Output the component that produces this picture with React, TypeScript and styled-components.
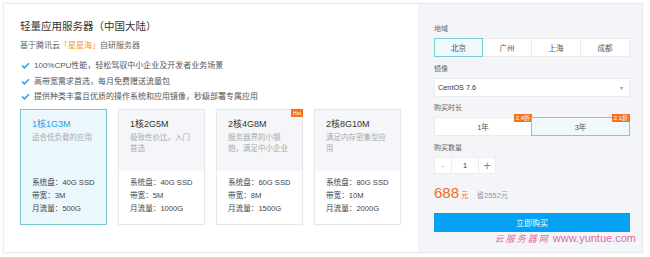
import styled, { createGlobalStyle } from "styled-components";

const GlobalStyle = createGlobalStyle`
  body {
    margin: 0;
    background: #fff;
    font-family: "Liberation Sans", "Noto Sans CJK SC", sans-serif;
    color: #333;
  }
`;

const plans = [
  { name: "1核1G3M", desc: "适合低负载的应用", disk: "40G SSD", bw: "3M", flow: "500G" },
  { name: "1核2G5M", desc: "极致性价比，入门首选", disk: "40G SSD", bw: "5M", flow: "1000G" },
  { name: "2核4G8M", desc: "服务器界的小钢炮，满足中小企业", disk: "60G SSD", bw: "8M", flow: "1500G", hot: true },
  { name: "2核8G10M", desc: "满足内存密集型应用", disk: "80G SSD", bw: "10M", flow: "2000G" },
];

const features = [
  "100%CPU性能，轻松驾驭中小企业及开发者业务场景",
  "高带宽需求首选，每月免费赠送流量包",
  "提供种类丰富且优质的操作系统和应用镜像，秒级部署专属应用",
];

const regions = ["北京", "广州", "上海", "成都"];

export default function App() {
  return (
    <>
      <GlobalStyle />
      <Page>
        <Panel>
          <Left>
            <Title>轻量应用服务器（中国大陆）</Title>
            <Subtitle>
              基于腾讯云<Highlight>「星星海」</Highlight>自研服务器
            </Subtitle>
            <FeatureList>
              {features.map((f) => (
                <Feature key={f}>
                  <svg width="9" height="7" viewBox="0 0 9 7">
                    <polyline points="1,3.5 3.4,5.8 8,1.2" fill="none" stroke="#3a9fdc" strokeWidth="1.6" />
                  </svg>
                  {f}
                </Feature>
              ))}
            </FeatureList>
            <Cards>
              {plans.map((p, i) => (
                <Card key={p.name} $active={i === 0}>
                  {p.hot && <HotBadge>Hot</HotBadge>}
                  <CardTop $active={i === 0}>
                    <CardName $active={i === 0}>{p.name}</CardName>
                    <CardDesc>{p.desc}</CardDesc>
                  </CardTop>
                  <CardSpecs>
                    <div>系统盘：{p.disk}</div>
                    <div>带宽：{p.bw}</div>
                    <div>月流量：{p.flow}</div>
                  </CardSpecs>
                </Card>
              ))}
            </Cards>
          </Left>
          <Right>
            <Label>地域</Label>
            <Segmented $cols={4}>
              {regions.map((r, i) => (
                <Option key={r} $active={i === 0}>{r}</Option>
              ))}
            </Segmented>
            <Label $gap={7}>镜像</Label>
            <Select>
              CentOS 7.6
              <Caret>▾</Caret>
            </Select>
            <Label $gap={6}>购买时长</Label>
            <Segmented $cols={2}>
              <Option>
                1年
                <Discount>2.4折</Discount>
              </Option>
              <Option $active>
                3年
                <Discount>2.1折</Discount>
              </Option>
            </Segmented>
            <Label $gap={7}>购买数量</Label>
            <Stepper>
              <StepBtn>-</StepBtn>
              <StepValue>1</StepValue>
              <StepBtn $plus>+</StepBtn>
            </Stepper>
            <PriceRow>
              <Price>688</Price>
              <Unit>元</Unit>
              <Save>省2552元</Save>
            </PriceRow>
            <BuyButton>立即购买</BuyButton>
            <Watermark>
              <span className="cn">云服务器网</span> www.yuntue.com
            </Watermark>
          </Right>
        </Panel>
      </Page>
    </>
  );
}

const Page = styled.div`
  padding: 3px;
`;

const Panel = styled.div`
  width: 640px;
  height: 250px;
  box-sizing: border-box;
  border: 1px solid #ebebeb;
  box-shadow: 0 0 3px rgba(0, 0, 0, 0.05);
  display: flex;
`;

const Left = styled.div`
  width: 414px;
  box-sizing: border-box;
  padding: 15px 0 0 16px;
  background: #fff;
`;

const Title = styled.div`
  font-size: 10.5px;
  line-height: 14px;
  color: #333;
`;

const Subtitle = styled.div`
  margin-top: 6px;
  font-size: 8px;
  line-height: 14px;
  color: #666;
`;

const Highlight = styled.span`
  color: #f29b2f;
`;

const FeatureList = styled.div`
  margin-top: 5px;
`;

const Feature = styled.div`
  display: flex;
  align-items: center;
  gap: 4px;
  font-size: 8px;
  line-height: 15.5px;
  color: #555;
  white-space: nowrap;
  svg {
    margin-left: 1px;
  }
`;

const Cards = styled.div`
  margin-top: 4px;
  display: flex;
  gap: 11px;
`;

const Card = styled.div<{ $active?: boolean }>`
  position: relative;
  width: 87px;
  height: 116px;
  box-sizing: border-box;
  border: 1px solid ${(p) => (p.$active ? "#7cc5d2" : "#e8e8e8")};
  background: ${(p) => (p.$active ? "#ecf7fd" : "#fff")};
  box-shadow: 0 0 2px rgba(0, 0, 0, 0.04);
`;

const CardTop = styled.div<{ $active?: boolean }>`
  height: 61px;
  box-sizing: border-box;
  padding: 8px 8px 0 11px;
  background: ${(p) => (p.$active ? "transparent" : "#f5f6f9")};
`;

const CardName = styled.div<{ $active?: boolean }>`
  font-size: 9px;
  line-height: 12px;
  color: ${(p) => (p.$active ? "#2ba0dc" : "#333")};
`;

const CardDesc = styled.div`
  margin-top: 2px;
  font-size: 7.5px;
  line-height: 11px;
  color: #aaa;
`;

const CardSpecs = styled.div`
  padding: 5px 0 0 11px;
  font-size: 7.6px;
  line-height: 13px;
  color: #444;
`;

const HotBadge = styled.div`
  position: absolute;
  top: -1px;
  right: -1px;
  width: 12px;
  height: 8px;
  background: #f5731c;
  color: #fff;
  font-size: 5px;
  line-height: 8px;
  text-align: center;
`;

const Right = styled.div`
  flex: 1;
  box-sizing: border-box;
  padding: 20px 12px 0 16px;
  background: #f4f5f8;
  display: flex;
  flex-direction: column;
`;

const Label = styled.div<{ $gap?: number }>`
  margin-top: ${(p) => p.$gap ?? 0}px;
  margin-bottom: 4px;
  font-size: 7px;
  line-height: 10px;
  color: #666;
`;

const Segmented = styled.div<{ $cols: number }>`
  display: grid;
  grid-template-columns: repeat(${(p) => p.$cols}, 1fr);
  height: 19px;
`;

const Option = styled.div<{ $active?: boolean }>`
  position: relative;
  display: flex;
  align-items: center;
  justify-content: center;
  box-sizing: border-box;
  margin-left: -1px;
  border: 1px solid ${(p) => (p.$active ? "#7cc9d8" : "#ebebeb")};
  background: ${(p) => (p.$active ? "#eef8fd" : "#fff")};
  z-index: ${(p) => (p.$active ? 1 : 0)};
  font-size: 7.5px;
  color: #555;
  &:first-child {
    margin-left: 0;
  }
`;

const Discount = styled.span`
  position: absolute;
  top: -4px;
  right: -1px;
  padding: 0 2px;
  height: 8px;
  background: #f5731c;
  color: #fff;
  font-size: 6px;
  line-height: 8px;
`;

const Select = styled.div`
  height: 19px;
  box-sizing: border-box;
  border: 1px solid #ebebeb;
  background: #fff;
  display: flex;
  align-items: center;
  justify-content: space-between;
  padding: 0 6px 0 3px;
  font-size: 7.3px;
  color: #333;
`;

const Caret = styled.span`
  font-size: 6px;
  color: #999;
`;

const Stepper = styled.div`
  display: flex;
  height: 17px;
`;

const StepBtn = styled.div<{ $plus?: boolean }>`
  width: 18px;
  box-sizing: border-box;
  border: 1px solid #ececec;
  background: #fff;
  display: flex;
  align-items: center;
  justify-content: center;
  font-size: ${(p) => (p.$plus ? "12px" : "9px")};
  color: ${(p) => (p.$plus ? "#1a9be2" : "#aaa")};
`;

const StepValue = styled.div`
  width: 26px;
  box-sizing: border-box;
  border-top: 1px solid #ececec;
  border-bottom: 1px solid #ececec;
  background: #fff;
  display: flex;
  align-items: center;
  justify-content: center;
  font-size: 7.5px;
  color: #333;
`;

const PriceRow = styled.div`
  margin-top: 9px;
  height: 20px;
  display: flex;
  align-items: baseline;
`;

const Price = styled.span`
  font-size: 15px;
  line-height: 20px;
  color: #f26d21;
`;

const Unit = styled.span`
  margin-left: 2px;
  font-size: 7.5px;
  color: #f26d21;
`;

const Save = styled.span`
  margin-left: 8px;
  font-size: 7.5px;
  color: #999;
`;

const BuyButton = styled.div`
  margin-top: 10px;
  height: 19px;
  background: #05a1f3;
  color: #fff;
  display: flex;
  align-items: center;
  justify-content: center;
  font-size: 8px;
`;

const Watermark = styled.div`
  align-self: flex-end;
  margin-right: -6px;
  font-size: 11px;
  line-height: 12px;
  color: #e46aa4;
  white-space: nowrap;
  .cn {
    font-family: "Liberation Serif", "Noto Sans CJK SC", serif;
    font-size: 9px;
    letter-spacing: 2px;
    font-style: italic;
  }
`;
